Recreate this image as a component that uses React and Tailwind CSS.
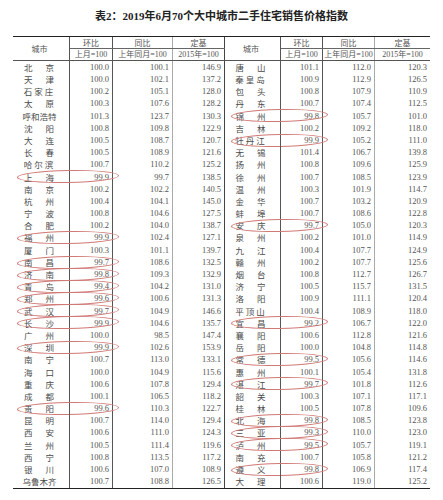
import React from "react";

const leftRows = [
  ["北京", "100.0", "100.1", "146.9"],
  ["天津", "100.0", "102.1", "137.2"],
  ["石家庄", "100.2", "105.1", "128.0"],
  ["太原", "100.3", "107.6", "128.2"],
  ["呼和浩特", "101.3", "123.7", "130.3"],
  ["沈阳", "100.8", "109.8", "122.9"],
  ["大连", "100.5", "108.7", "120.7"],
  ["长春", "100.5", "108.9", "121.6"],
  ["哈尔滨", "100.7", "110.2", "125.2"],
  ["上海", "99.9", "99.7", "138.5"],
  ["南京", "100.2", "102.2", "140.5"],
  ["杭州", "100.4", "104.1", "145.0"],
  ["宁波", "100.8", "104.6", "127.5"],
  ["合肥", "100.2", "104.0", "138.7"],
  ["福州", "99.9", "102.4", "127.1"],
  ["厦门", "100.3", "101.1", "139.7"],
  ["南昌", "99.7", "108.6", "132.5"],
  ["济南", "99.8", "109.3", "132.9"],
  ["青岛", "99.4", "104.2", "131.0"],
  ["郑州", "99.6", "100.6", "131.3"],
  ["武汉", "99.7", "104.9", "146.6"],
  ["长沙", "99.9", "104.6", "135.7"],
  ["广州", "100.0", "98.5", "147.4"],
  ["深圳", "99.9", "102.6", "153.9"],
  ["南宁", "100.7", "113.0", "133.1"],
  ["海口", "100.0", "104.9", "115.6"],
  ["重庆", "100.6", "107.8", "129.4"],
  ["成都", "100.1", "106.5", "118.2"],
  ["贵阳", "99.6", "110.3", "122.7"],
  ["昆明", "100.7", "114.0", "129.4"],
  ["西安", "100.6", "111.0", "124.3"],
  ["兰州", "100.5", "111.4", "119.6"],
  ["西宁", "100.8", "113.5", "117.2"],
  ["银川", "100.6", "107.0", "108.9"],
  ["乌鲁木齐", "100.7", "108.8", "126.5"],
];

const rightRows = [
  ["唐山", "101.1", "112.0", "120.3"],
  ["秦皇岛", "100.9", "112.9", "126.5"],
  ["包头", "100.8", "107.9", "110.9"],
  ["丹东", "100.7", "107.4", "112.5"],
  ["锦州", "99.8", "105.7", "101.0"],
  ["吉林", "100.2", "109.2", "118.0"],
  ["牡丹江", "99.9", "105.2", "111.0"],
  ["无锡", "101.4", "106.7", "139.8"],
  ["扬州", "100.8", "109.6", "125.9"],
  ["徐州", "100.7", "108.5", "123.9"],
  ["温州", "100.3", "101.9", "114.7"],
  ["金华", "100.7", "103.2", "120.9"],
  ["蚌埠", "100.7", "108.6", "122.8"],
  ["安庆", "99.7", "105.0", "120.3"],
  ["泉州", "100.2", "101.0", "114.9"],
  ["九江", "100.4", "107.7", "124.9"],
  ["赣州", "100.2", "107.7", "125.6"],
  ["烟台", "100.8", "112.7", "126.7"],
  ["济宁", "100.5", "115.7", "131.5"],
  ["洛阳", "100.9", "111.1", "120.4"],
  ["平顶山", "100.4", "108.9", "118.0"],
  ["宜昌", "99.2", "106.7", "122.0"],
  ["襄阳", "100.6", "112.8", "121.6"],
  ["岳阳", "100.0", "104.8", "114.8"],
  ["常德", "99.5", "105.6", "114.6"],
  ["惠州", "100.1", "105.4", "131.8"],
  ["湛江", "99.7", "101.8", "112.6"],
  ["韶关", "100.3", "107.1", "117.1"],
  ["桂林", "100.5", "107.8", "109.6"],
  ["北海", "99.8", "108.5", "123.8"],
  ["三亚", "99.3", "110.0", "123.0"],
  ["泸州", "99.5", "105.7", "119.1"],
  ["南充", "100.7", "105.8", "121.2"],
  ["遵义", "99.8", "106.9", "117.4"],
  ["大理", "100.6", "119.0", "125.2"],
];

// column widths per half, written out so tailwind picks them up
const leftCols = ["w-[57px]", "w-[43px]", "w-[60px]", "w-[52px]"];
const rightCols = ["w-[56px]", "w-[42px]", "w-[52px]", "w-[55px]"];

const City = ({ name }) => {
  if (name.length === 2) {
    return (
      <div className="flex w-[31px] justify-between pr-[1px]">
        <span>{name[0]}</span>
        <span>{name[1]}</span>
      </div>
    );
  }
  if (name.length === 3) {
    return <span className="tracking-[2px]">{name}</span>;
  }
  return <span>{name}</span>;
};

const Half = ({ row, right }) => {
  const cols = right ? rightCols : leftCols;
  const circled = parseFloat(row[1]) < 100;
  return (
    <div className="relative flex h-full">
      <div
        className={`${cols[0]} flex h-full items-center justify-center border-r border-[#555] pr-[3px] font-['Noto_Sans_CJK_SC',sans-serif] text-[8.5px] text-[#4a4a4a]`}
      >
        <City name={row[0]} />
      </div>
      <div className={`${cols[1]} flex h-full items-center justify-end border-r border-[#555] pr-[3px]`}>
        {row[1]}
      </div>
      <div className={`${cols[2]} flex h-full items-center justify-end border-r border-[#aaa] pr-[3px]`}>
        {row[2]}
      </div>
      <div
        className={`${cols[3]} flex h-full items-center justify-end pr-[3px] ${
          right ? "" : "border-r border-[#444]"
        }`}
      >
        {row[3]}
      </div>
      {circled && (
        <div
          className={`absolute top-[-0.5px] h-[13px] -rotate-1 rounded-[50%] border border-[#d07a76] ${
            right ? "left-[6px] w-[97px]" : "left-[4px] w-[102px]"
          }`}
        />
      )}
    </div>
  );
};

const HeaderHalf = ({ right }) => {
  const cols = right ? rightCols : leftCols;
  const sub = "flex h-[11px] items-center justify-center text-[8px] text-[#555]";
  return (
    <div className="flex">
      <div
        className={`${cols[0]} flex items-center justify-center border-r border-[#555] pr-[3px] font-['Noto_Sans_CJK_SC',sans-serif] text-[8px] text-[#555]`}
      >
        城市
      </div>
      <div className="flex flex-col">
        <div className="flex font-['Noto_Sans_CJK_SC',sans-serif]">
          <div className={`${cols[1]} ${sub} border-r border-[#555]`}>环比</div>
          <div className={`${cols[2]} ${sub} border-r border-[#aaa]`}>同比</div>
          <div className={`${cols[3]} ${sub} ${right ? "" : "border-r border-[#444]"}`}>定基</div>
        </div>
        <div className="flex border-t border-[#666]">
          <div className={`${cols[1]} ${sub} border-r border-[#555]`}>上月=100</div>
          <div className={`${cols[2]} ${sub} border-r border-[#aaa]`}>上年同月=100</div>
          <div className={`${cols[3]} ${sub} ${right ? "" : "border-r border-[#444]"}`}>2015年=100</div>
        </div>
      </div>
    </div>
  );
};

const App = () => {
  return (
    <div className="h-[500px] w-[443px] overflow-hidden bg-white font-['Liberation_Serif','Noto_Sans_CJK_SC',serif] text-[#555]">
      <h1 className="h-[23px] pt-[9px] text-center text-[11px] font-bold leading-[14px] text-[#222]">
        表2：2019年6月70个大中城市二手住宅销售价格指数
      </h1>

      <div className="ml-[13px] mt-[13px] w-[417px] border-y-[1.5px] border-[#222]">
        {/* two-level header */}
        <div className="flex border-b border-[#555]">
          <HeaderHalf />
          <HeaderHalf right />
        </div>

        {leftRows.map((row, i) => (
          <div key={row[0]} className="flex h-[12.2px] text-[8.5px] leading-none">
            <Half row={row} />
            <Half row={rightRows[i]} right />
          </div>
        ))}
      </div>
    </div>
  );
};

export default App;
